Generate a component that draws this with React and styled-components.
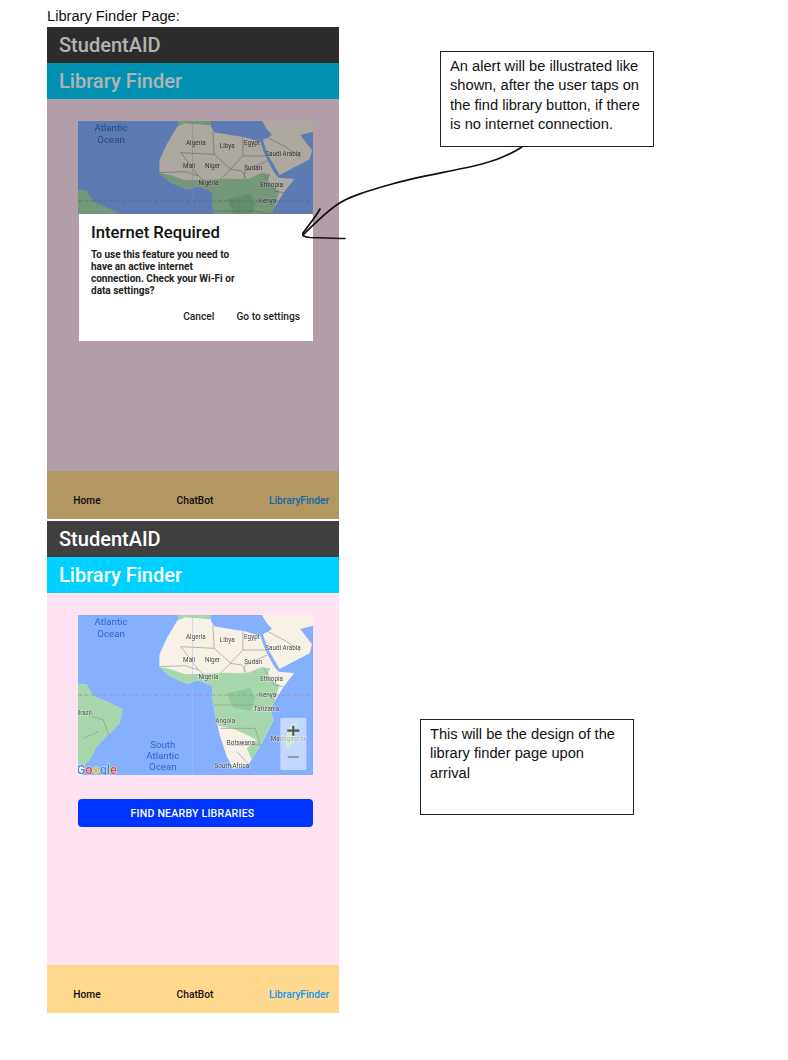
import React from "react";
import styled, { createGlobalStyle } from "styled-components";

const GlobalStyle = createGlobalStyle`
  html, body {
    margin: 0;
    padding: 0;
    background: #fff;
  }
`;

const Sheet = styled.div`
  position: relative;
  width: 788px;
  height: 1060px;
  overflow: hidden;
  padding-left: 47px;
  box-sizing: border-box;
  font-family: "Liberation Sans", Arial, sans-serif;
  color: #111;
`;

const PageLabel = styled.div`
  height: 27px;
  padding-top: 6px;
  box-sizing: border-box;
  font-size: 14.67px;
  line-height: 20px;
`;

const Row = styled.div`
  display: flex;
  align-items: flex-start;
  margin-bottom: 2px;
`;

const Note = styled.div`
  width: 214px;
  height: 96px;
  margin-left: ${(p) => p.$left}px;
  margin-top: ${(p) => p.$top}px;
  padding: 5px 9px;
  box-sizing: border-box;
  border: 1px solid #222;
  font-size: 14.67px;
  line-height: 19.4px;
`;

const Phone = styled.div`
  position: relative;
  width: 292px;
  height: 492px;
  flex: none;
  display: flex;
  flex-direction: column;
  font-family: Roboto, sans-serif;
`;

const Dim = styled.div`
  position: absolute;
  inset: 0;
  background: rgba(0, 0, 0, 0.3);
`;

const TitleBar = styled.div`
  height: 36px;
  flex: none;
  display: flex;
  align-items: center;
  padding-left: 12px;
  background: ${(p) => p.$bg};
  color: #fff;
  font-size: 20px;
  font-weight: 500;
`;

const Body = styled.div`
  flex: 1;
  background: #ffe3f3;
  padding: 22px 26px 0 31px;
`;

const MapFrame = styled.svg`
  display: block;
  width: 235px;
  height: ${(p) => p.$height}px;
  filter: blur(0.35px);
`;

const MapLabel = styled.text`
  font-family: Roboto, sans-serif;
  font-size: ${(p) => (p.$sea ? 29 : 19)}px;
  fill: ${(p) => (p.$sea ? "#2a66c8" : "#444")};
  text-anchor: middle;
  stroke: ${(p) => (p.$sea ? "none" : "rgba(255, 255, 255, 0.55)")};
  stroke-width: 3px;
  paint-order: stroke;
`;

const GoogleMark = styled.text`
  font-family: Roboto, sans-serif;
  font-size: 38px;
  font-weight: 500;
  stroke: rgba(255, 255, 255, 0.7);
  stroke-width: 3px;
  paint-order: stroke;
`;

const FindButton = styled.button`
  display: block;
  width: 235px;
  height: 28px;
  margin-top: 24px;
  padding: 0 6px 0 0;
  border: 0;
  border-radius: 4px;
  background: #0035ff;
  color: #fff;
  font-family: Roboto, sans-serif;
  font-size: 10.6px;
  font-weight: 500;
  letter-spacing: 0.2px;
`;

const TabBar = styled.div`
  height: 48px;
  flex: none;
  display: grid;
  grid-template-columns: 80px 136px 72px;
  align-items: end;
  padding-bottom: 12px;
  box-sizing: border-box;
  background: #ffd88f;
`;

const Tab = styled.div`
  text-align: center;
  white-space: nowrap;
  font-size: 10.2px;
  font-weight: 500;
  line-height: 12px;
  color: ${(p) => (p.$active ? "#1296f0" : "#111")};
`;

const Dialog = styled.div`
  position: absolute;
  left: 32px;
  top: 187px;
  width: 234px;
  height: 127px;
  padding: 9px 13px 0 12px;
  box-sizing: border-box;
  background: #fff;
  display: flex;
  flex-direction: column;
`;

const DialogTitle = styled.div`
  font-size: 16.7px;
  font-weight: 500;
  line-height: 20px;
  color: #111;
`;

const DialogText = styled.div`
  width: 146px;
  margin-top: 6px;
  font-size: 10px;
  font-weight: 700;
  line-height: 11.9px;
  color: #222;
`;

const DialogActions = styled.div`
  display: flex;
  justify-content: flex-end;
  align-items: center;
  gap: 22px;
  margin-top: 14px;
`;

const DialogAction = styled.div`
  font-size: 10.2px;
  font-weight: 500;
  color: #222;
`;

const ArrowLayer = styled.svg`
  position: absolute;
  left: 0;
  top: 0;
  pointer-events: none;
`;

const WATER = "#84b0ff";
const LAND = "#f8f2e6";
const GREEN = "#a6d8ac";
const BORDER = "#8f8f8f";

// x, y are in the map's viewBox, which is the picture's 3x crop of it
const MAP_LABELS = [
  { x: 123, y: 61, text: "Atlantic", sea: true },
  { x: 123, y: 95, text: "Ocean", sea: true },
  { x: 278, y: 429, text: "South", sea: true },
  { x: 278, y: 462, text: "Atlantic", sea: true },
  { x: 278, y: 495, text: "Ocean", sea: true },
  { x: 377, y: 103, text: "Algeria" },
  { x: 471, y: 111, text: "Libya" },
  { x: 545, y: 102, text: "Egypt" },
  { x: 638, y: 134, text: "Saudi Arabia" },
  { x: 357, y: 171, text: "Mali" },
  { x: 427, y: 172, text: "Niger" },
  { x: 549, y: 176, text: "Sudan" },
  { x: 415, y: 221, text: "Nigeria" },
  { x: 604, y: 227, text: "Ethiopia" },
  { x: 592, y: 276, text: "Kenya" },
  { x: 589, y: 317, text: "Tanzania" },
  { x: 465, y: 354, text: "Angola" },
  { x: 512, y: 421, text: "Botswana" },
  { x: 485, y: 490, text: "South Africa" },
  { x: 42, y: 329, text: "Brazil" },
  { x: 654, y: 409, text: "Madagascar" },
];

function WorldMap({ cropped }) {
  const visibleHeight = cropped ? 279 : 480;
  const labels = MAP_LABELS.filter((l) => l.y < 30 + visibleHeight - 8);
  return (
    <MapFrame viewBox={`24 30 704 ${visibleHeight}`} preserveAspectRatio="none" $height={cropped ? 93 : 160}>
      <rect x="24" y="30" width="704" height="480" fill={WATER} />
      {/* the continent */}
      <path
        fill={LAND}
        d="M322 46 L345 36 L420 42 L432 64 L480 72 L520 78 L570 92 L585 135 L612 185 L625 200 L672 204 L640 245 L612 290 L600 315 L610 345 L590 385 L572 420 L535 478 L490 492 L470 455 L450 395 L438 345 L428 290 L425 242 L385 226 L350 236 L300 214 L268 186 L268 148 L290 100 Z"
      />
      {/* sahel and central belt */}
      <path
        fill={GREEN}
        d="M268 186 L300 192 L345 208 L400 206 L470 203 L530 205 L575 186 L600 190 L590 215 L618 235 L628 240 L612 290 L600 315 L610 345 L590 385 L572 420 L545 465 L530 430 L560 405 L520 385 L490 372 L445 362 L438 345 L428 290 L425 242 L385 226 L350 236 L300 214 Z"
      />
      <path fill="#8ccb98" d="M470 265 L540 248 L555 280 L540 318 L490 308 Z" />
      {/* europe edge, middle east, arabia */}
      <path fill={GREEN} d="M322 30 L420 30 L424 42 L345 36 L325 44 Z" />
      <path fill={LAND} d="M575 30 L728 30 L728 62 L690 72 L725 118 L718 145 L628 192 L592 130 L578 88 L605 72 L590 55 Z" />
      {/* brazil */}
      <path
        fill={GREEN}
        d="M24 236 L50 238 L70 272 L110 288 L158 312 L150 355 L110 395 L80 425 L60 465 L45 480 L24 480 Z"
      />
      <path fill={LAND} d="M24 480 L45 480 L35 510 L24 510 Z" />
      {/* madagascar */}
      <path fill={GREEN} d="M660 360 L680 350 L672 410 L650 432 L642 405 Z" />
      {/* borders */}
      <g fill="none" stroke={BORDER} strokeWidth="1.8">
        <path d="M428 62 L432 130 L482 175 L450 205" />
        <path d="M518 78 L518 135 L585 135" />
        <path d="M518 135 L480 175 L515 180 L530 205" />
        <path d="M332 125 L432 130" />
        <path d="M332 125 L385 195 L400 208" />
        <path d="M268 185 L345 182 L385 195" />
        <path d="M520 205 L525 180 L590 150" />
        <path d="M580 190 L612 240 L640 245" />
        <path d="M430 300 L550 300 L610 310" />
        <path d="M450 370 L555 370 L570 420" />
        <path d="M480 420 L575 420" />
        <path d="M500 440 L535 478" />
        <path d="M590 78 L650 110 L690 140" />
        <path d="M24 320 L100 345 L120 400" />
        <path d="M40 400 L85 380" />
      </g>
      <path d="M367 30 V510" stroke="#a8bfe8" strokeWidth="1.5" />
      <path d="M24 270 H728" stroke="#a08ca8" strokeWidth="2.4" strokeDasharray="12 7" />

      {labels.map((l) => (
        <MapLabel key={l.text + l.y} x={l.x} y={l.y} $sea={l.sea}>
          {l.text}
        </MapLabel>
      ))}

      {!cropped && (
        <>
          <GoogleMark x="20" y="507">
            <tspan fill="#4285f4">G</tspan>
            <tspan fill="#ea4335">o</tspan>
            <tspan fill="#fbbc05">o</tspan>
            <tspan fill="#4285f4">g</tspan>
            <tspan fill="#34a853">l</tspan>
            <tspan fill="#ea4335">e</tspan>
          </GoogleMark>
          {/* zoom controls */}
          <rect x="630" y="338" width="78" height="157" rx="3" fill="#fff" fillOpacity="0.5" />
          <path d="M669 362 V392 M651 377 H687" stroke="#555" strokeWidth="6.5" />
          <path d="M652 456 H686" stroke="#9a9a9a" strokeWidth="6" />
        </>
      )}
    </MapFrame>
  );
}

function LibraryScreen({ alert }) {
  return (
    <Phone>
      <TitleBar $bg="#3f3f3f">StudentAID</TitleBar>
      <TitleBar $bg="#00d0ff">Library Finder</TitleBar>
      <Body>
        <WorldMap cropped={alert} />
        {!alert && <FindButton>FIND NEARBY LIBRARIES</FindButton>}
      </Body>
      <TabBar>
        <Tab>Home</Tab>
        <Tab>ChatBot</Tab>
        <Tab $active>LibraryFinder</Tab>
      </TabBar>
      {alert && <Dim />}
      {alert && (
        <Dialog>
          <DialogTitle>Internet Required</DialogTitle>
          <DialogText>
            To use this feature you need to have an active internet connection. Check your Wi-Fi or data settings?
          </DialogText>
          <DialogActions>
            <DialogAction>Cancel</DialogAction>
            <DialogAction>Go to settings</DialogAction>
          </DialogActions>
        </Dialog>
      )}
    </Phone>
  );
}

export default function App() {
  return (
    <Sheet>
      <GlobalStyle />
      <PageLabel>Library Finder Page:</PageLabel>
      <Row>
        <LibraryScreen alert />
        <Note $left={101} $top={24}>
          An alert will be illustrated like shown, after the user taps on the find library button, if there is no internet connection.
        </Note>
      </Row>
      <Row>
        <LibraryScreen />
        <Note $left={81} $top={198}>
          This will be the design of the library finder page upon arrival
        </Note>
      </Row>
      <ArrowLayer width="788" height="1060" viewBox="0 0 788 1060" fill="none" stroke="#111" strokeLinecap="round">
        <path d="M522 147 C508 156 498 160 482 164 C455 171 420 176 392 184 C368 191 350 196 338 204 C326 212 314 224 303 235" strokeWidth="1.7" />
        <path d="M320 209 C315 218 308 226 303 233 C302 236 305 237 310 237.5 C322 238 334 238 345 238.5" strokeWidth="1.7" />
      </ArrowLayer>
    </Sheet>
  );
}
